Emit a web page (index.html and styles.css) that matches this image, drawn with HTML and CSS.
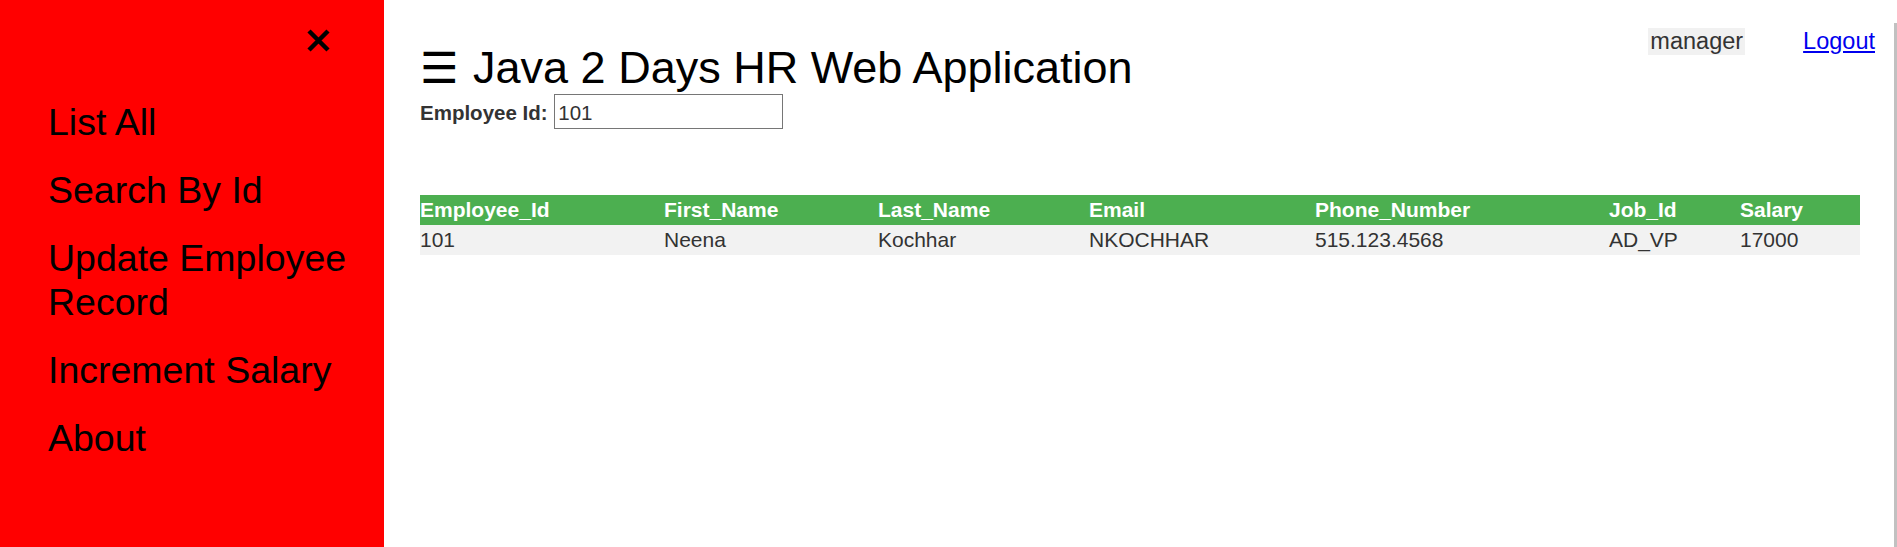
FILE: index.html
```html
<!DOCTYPE html>
<html lang="en">
<head>
<meta charset="UTF-8" />
<meta name="viewport" content="width=device-width, initial-scale=1.0" />
<title>Java 2 Days HR Web Application</title>
<link rel="stylesheet" href="styles.css">
</head>
<body>

<div class="sidenav">
  <div class="close-row">
    <a href="#" class="closebtn" title="Close">
      <svg width="23" height="23" viewBox="0 0 23 23"><path d="M2 2L21 21M21 2L2 21" stroke="#000" stroke-width="4.5" fill="none"/></svg>
    </a>
  </div>
  <a href="#">List All</a>
  <a href="#">Search By Id</a>
  <a href="#">Update Employee Record</a>
  <a href="#">Increment Salary</a>
  <a href="#">About</a>
</div>

<div class="main">
  <div class="topbar">
    <div class="heading">
      <h1><span class="menu-icon">&#9776;</span> Java 2 Days HR Web Application</h1>
      <form class="search">
        <label for="empId">Employee Id:</label> <input type="text" id="empId" value="101">
      </form>
    </div>
    <div class="user">
      <span class="username">manager</span>
      <a href="#">Logout</a>
    </div>
  </div>

  <div class="results">
    <table>
      <colgroup>
        <col style="width:244px">
        <col style="width:214px">
        <col style="width:211px">
        <col style="width:226px">
        <col style="width:294px">
        <col style="width:131px">
        <col style="width:120px">
      </colgroup>
      <tr>
        <th>Employee_Id</th>
        <th>First_Name</th>
        <th>Last_Name</th>
        <th>Email</th>
        <th>Phone_Number</th>
        <th>Job_Id</th>
        <th>Salary</th>
      </tr>
      <tr>
        <td>101</td>
        <td>Neena</td>
        <td>Kochhar</td>
        <td>NKOCHHAR</td>
        <td>515.123.4568</td>
        <td>AD_VP</td>
        <td>17000</td>
      </tr>
    </table>
  </div>
</div>

<div class="scrollbar"></div>

</body>
</html>
```

FILE: styles.css
```css
body {
  font-family: "Liberation Sans", Arial, sans-serif;
  margin: 0;
  display: flex;
  min-height: 547px;
  background-color: #fff;
  overflow: hidden;
}
.sidenav {
  width: 384px;
  flex-shrink: 0;
  background-color: #ff0000;
  padding-bottom: 20px;
}
.close-row {
  display: flex;
  justify-content: flex-end;
  padding: 29px 54px 0 0;
  margin-bottom: 36px;
}
.closebtn {
  display: block;
  line-height: 0;
}
.sidenav > a {
  display: block;
  padding: 12px 20px 12px 48px;
  font-size: 37.5px;
  line-height: 44px;
  color: #000;
  text-decoration: none;
}
.main {
  flex: 1;
  padding: 28px 22px 0 36px;
}
.topbar {
  display: flex;
  justify-content: space-between;
  align-items: flex-start;
}
h1 {
  font-size: 45px;
  font-weight: normal;
  margin: 14px 0 0 0;
  color: #000;
}
.menu-icon {
  font-family: "DejaVu Sans", sans-serif;
  font-size: 43px;
  margin-right: 2px;
}
.search {
  margin: 0;
  font-size: 20.5px;
  color: #333;
}
.search label {
  font-weight: bold;
}
.search input {
  box-sizing: border-box;
  width: 229px;
  height: 35px;
  margin-left: 1px;
  padding: 3px 3px 0;
  border: 1px solid #767676;
  font-family: "Liberation Sans", Arial, sans-serif;
  font-size: 20.5px;
  color: #333;
}
.user {
  display: flex;
  align-items: baseline;
  gap: 58px;
  font-size: 23.5px;
}
.username {
  background-color: #f1f1f1;
  color: #333;
  padding: 0 2px;
  line-height: 27px;
}
.user a {
  color: #0000ee;
}
.results {
  padding-right: 14px;
  margin-top: 66px;
}
table {
  width: 1440px;
  border-collapse: collapse;
  table-layout: fixed;
  font-size: 21px;
}
th, td {
  text-align: left;
  padding: 3px 0;
  line-height: 24px;
}
th {
  background-color: #4CAF50;
  color: white;
}
td {
  background-color: #f2f2f2;
  color: #333;
}
.scrollbar {
  position: fixed;
  top: 23px;
  right: 0;
  width: 3px;
  bottom: 0;
  background-color: #c1c1c1;
}
```
